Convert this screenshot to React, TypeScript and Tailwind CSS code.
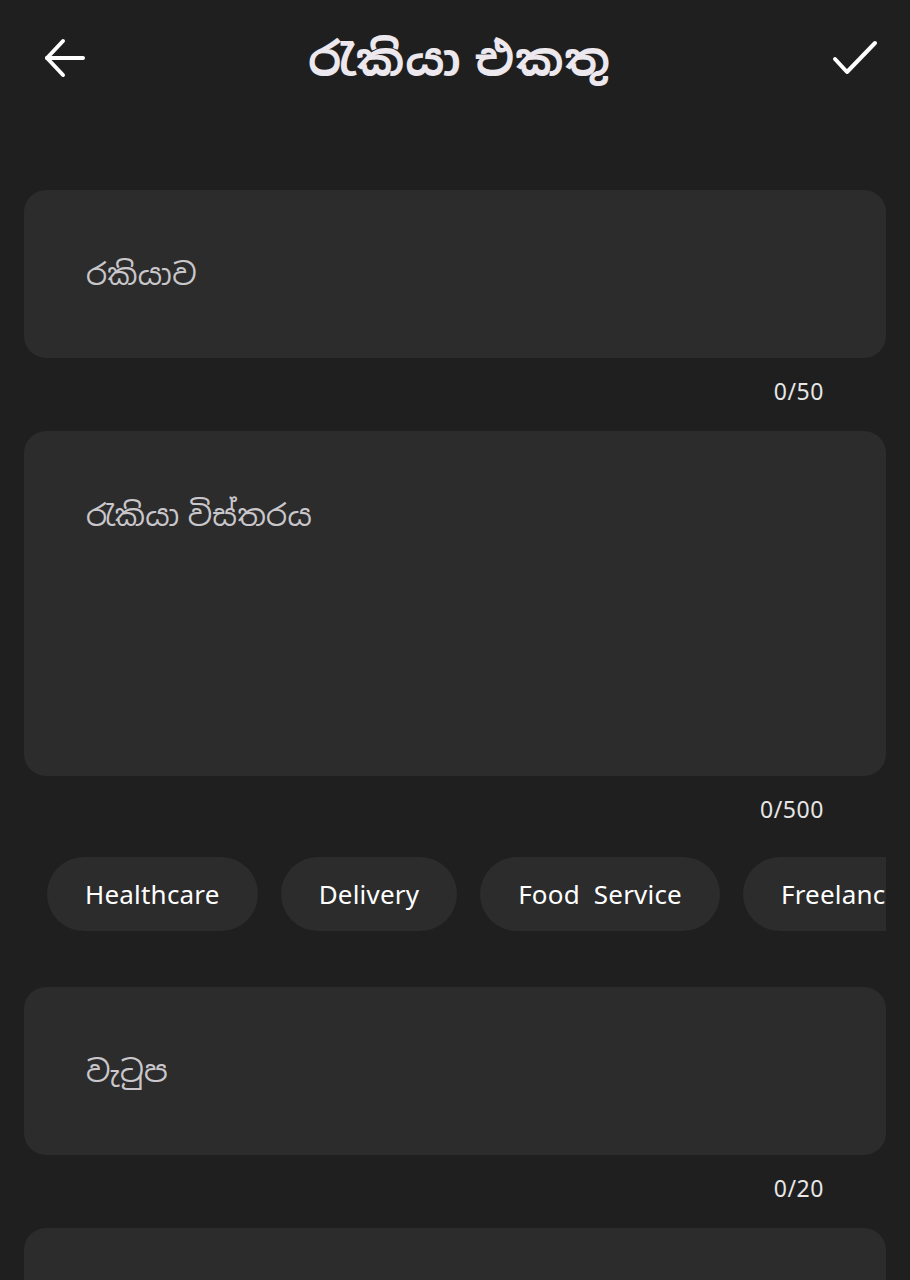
const font = "font-['Noto_Sans','Noto_Sans_Sinhala',sans-serif]";

function Field({ placeholder, counter, tall }: { placeholder: string; counter: string; tall?: boolean }) {
  return (
    <div className="flex flex-col">
      <div
        className={`rounded-[22px] bg-[#2c2c2c] px-[62px] ${tall ? "h-[345px] pt-[69px]" : "h-[168px] flex items-center"}`}
      >
        <span className="text-[30px] text-[#c9c7cb] leading-none tracking-[0.3px]">{placeholder}</span>
      </div>
      <div className="flex justify-end pr-[62px] pt-[22px] h-[73px]">
        <span className="text-[23px] text-[#e6e6e6] leading-none tracking-wide">{counter}</span>
      </div>
    </div>
  );
}

export default function App() {
  const chips = ["Healthcare", "Delivery", "Food  Service", "Freelance"];
  return (
    <div className={`h-[1280px] overflow-hidden bg-[#1f1f1f] text-white ${font}`}>
      <header className="flex items-center justify-between pl-[41px] pr-[30px] h-[116px]">
        <svg width="48" height="48" viewBox="0 0 48 48" fill="none" stroke="white" strokeWidth="4" strokeLinecap="round" strokeLinejoin="round">
          <path d="M42 24H6" />
          <path d="M22 7 6 24l16 17" />
        </svg>
        <h1 className="text-[46px] font-bold text-[#ece8ee] leading-none tracking-[1px]">රැකියා එකතු</h1>
        <svg width="50" height="40" viewBox="0 0 50 40" fill="none" stroke="white" strokeWidth="4" strokeLinecap="round" strokeLinejoin="round">
          <path d="M5 21l12 13L45 5" />
        </svg>
      </header>

      <main className="px-[24px] pt-[74px] flex flex-col">
        <Field placeholder="රකියාව" counter="0/50" />
        <Field placeholder="රැකියා විස්තරය" counter="0/500" tall />
        <div className="mt-[8px] mb-[56px] overflow-hidden">
          <div className="flex gap-[23px] pl-[23px] w-max">
            {chips.map((c) => (
              <div
                key={c}
                className="h-[74px] px-[38px] rounded-full bg-[#2c2c2c] flex items-center text-[26px] text-white whitespace-pre tracking-[0.2px]"
              >
                {c}
              </div>
            ))}
          </div>
        </div>
        <Field placeholder="වැටුප" counter="0/20" />
        <div className="rounded-[22px] bg-[#2c2c2c] h-[168px]" />
      </main>
    </div>
  );
}
